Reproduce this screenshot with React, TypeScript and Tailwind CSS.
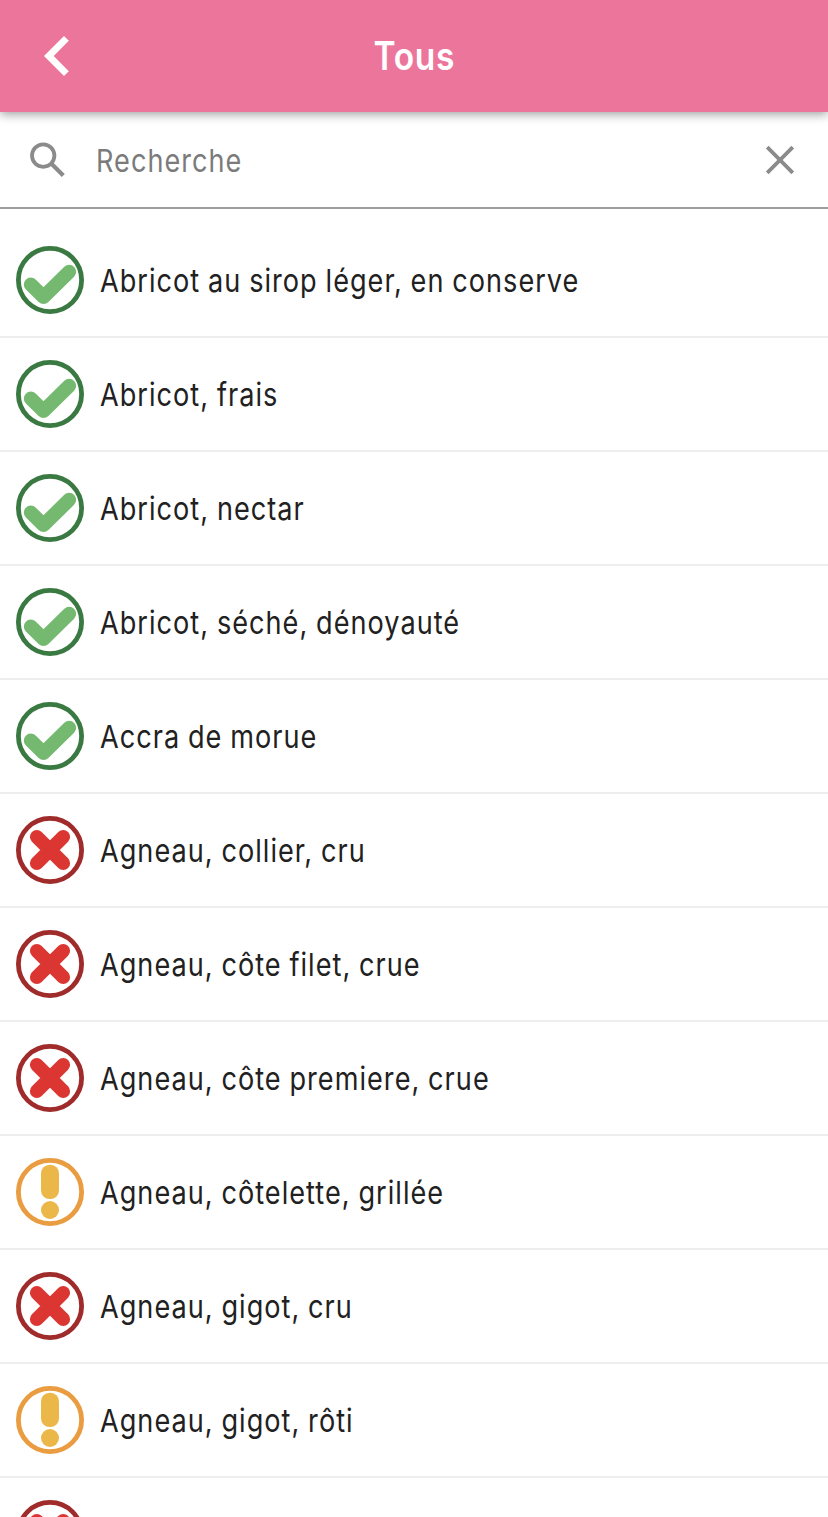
type Status = "ok" | "no" | "warn";

const foods: { name: string; status: Status }[] = [
  { name: "Abricot au sirop léger, en conserve", status: "ok" },
  { name: "Abricot, frais", status: "ok" },
  { name: "Abricot, nectar", status: "ok" },
  { name: "Abricot, séché, dénoyauté", status: "ok" },
  { name: "Accra de morue", status: "ok" },
  { name: "Agneau, collier, cru", status: "no" },
  { name: "Agneau, côte filet, crue", status: "no" },
  { name: "Agneau, côte premiere, crue", status: "no" },
  { name: "Agneau, côtelette, grillée", status: "warn" },
  { name: "Agneau, gigot, cru", status: "no" },
  { name: "Agneau, gigot, rôti", status: "warn" },
  { name: "", status: "no" },
];

const ring: Record<Status, string> = { ok: "#3a7a42", no: "#9f2c2b", warn: "#e99c40" };

function StatusIcon({ status }: { status: Status }) {
  return (
    <svg viewBox="0 0 68 68" className="size-[68px] shrink-0" fill="none" strokeLinecap="round">
      <circle cx="34" cy="34" r="31.6" stroke={ring[status]} strokeWidth="4.8" />
      {status === "ok" && (
        <path d="M14.8 38.6 27.5 51 53.2 25.8" stroke="#75b970" strokeWidth="14" strokeLinejoin="round" />
      )}
      {status === "no" && (
        <path d="M20.8 20.8 47.2 47.2M47.2 20.8 20.8 47.2" stroke="#dc3633" strokeWidth="13.8" />
      )}
      {status === "warn" && (
        <g fill="#ebb748">
          <rect x="25" y="6.8" width="18" height="34.2" rx="8.6" />
          <circle cx="34" cy="52" r="9" />
        </g>
      )}
    </svg>
  );
}

export default function App() {
  return (
    <div className="flex h-[1517px] w-[828px] flex-col overflow-hidden bg-white font-['Inter',sans-serif] text-[#212121]">
      <header className="relative z-10 grid h-28 shrink-0 grid-cols-[1fr_auto_1fr] items-center bg-[#ec759c] shadow-[0_2px_10px_rgba(0,0,0,0.4)]">
        <button aria-label="Retour" className="ml-11 w-[25px]">
          <svg viewBox="0 0 25 40" className="h-10 w-[25px]" fill="none" stroke="#fff" strokeWidth="6.8">
            <path d="M22.4 2.4 4.8 20 22.4 37.6" />
          </svg>
        </button>
        <h1 className="scale-x-[0.86] text-[39px] font-semibold tracking-[0.7px] text-white">Tous</h1>
      </header>
      <div className="flex h-[97px] shrink-0 items-center border-b-2 border-[#9e9e9e] pr-8 pl-7">
        <svg viewBox="0 0 40 40" className="size-10 shrink-0" fill="none" stroke="#8b8b8b">
          <circle cx="15.2" cy="15.6" r="11.2" strokeWidth="3.8" />
          <path d="M22.8 23.2 26 26.2 35.3 35.5" strokeWidth="4.2" />
        </svg>
        <input
          placeholder="Recherche"
          className="ml-7 min-w-0 flex-1 origin-left scale-x-[0.86] pt-0.5 text-[31.5px] tracking-[1.2px] outline-none placeholder:text-[#7b7b7b]"
        />
        <svg viewBox="0 0 32 32" className="size-8 shrink-0" fill="none" stroke="#8b8b8b" strokeWidth="3.8">
          <path d="M3.2 3.2 28.8 28.8M28.8 3.2 3.2 28.8" />
        </svg>
      </div>
      <ul className="pt-[15px]">
        {foods.map((food, i) => (
          <li key={i} className="flex h-[114px] items-center border-b-2 border-[#eeeeee] px-4">
            <StatusIcon status={food.status} />
            <span className="ml-4 origin-left scale-x-[0.86] pt-px text-[31.5px] tracking-[1.2px] whitespace-nowrap [word-spacing:-1px]">
              {food.name}
            </span>
          </li>
        ))}
      </ul>
    </div>
  );
}
